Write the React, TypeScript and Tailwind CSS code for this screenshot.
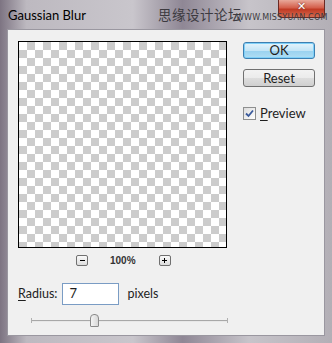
export default function App() {
  return (
    <div className="w-[332px] h-[343px] overflow-hidden bg-[linear-gradient(90deg,#7d7482_0%,#bdb9c0_8%,#c9c6cc_40%,#8f8795_55%,#c7c4ca_75%,#b3afb6_100%)] flex flex-col font-['Lato','Noto_Sans',sans-serif] text-[12.5px] text-[#1e1e1e]">
      {/* title bar */}
      <div className="h-[29px] flex items-start relative">
        <span className="ml-[8px] mt-[6px] text-[13px] text-black">Gaussian Blur</span>
        <span className="absolute left-[158px] top-[5px] text-[13.5px] leading-[18px] text-[#3c3a40] font-['Noto_Sans_CJK_SC',sans-serif] tracking-[0.5px]">
          思缘设计论坛
        </span>
        <div className="absolute left-[278px] top-0 w-[47px] h-[18px] rounded-b-[4px] border border-t-0 border-[#6b2a24] bg-[linear-gradient(#e8a89a_0%,#d4604c_45%,#c03a24_55%,#d66a4e_100%)] flex justify-center">
          <span className="mt-[1px] text-white font-bold text-[11px] leading-[11px] font-['DejaVu_Sans',sans-serif] [text-shadow:0_0_2px_#5a1a10]">✕</span>
        </div>
        <span className="absolute left-[236px] top-[13px] text-[8px] leading-[9px] font-['DejaVu_Sans',sans-serif] text-[#3c3a40] tracking-[0.2px]">
          WWW.MISSYUAN.COM
        </span>
      </div>

      {/* client area */}
      <div className="mx-[7px] h-[307px] bg-[#f0f0f0] border border-[#9a97a0] flex">
        <div className="flex flex-col pl-[10px] pt-[11px]">
          <div className="w-[209px] h-[207px] border border-black bg-[conic-gradient(#cccccc_25%,#ffffff_0_50%,#cccccc_0_75%,#ffffff_0)] bg-[length:16px_16px]" />

          <div className="flex items-center h-[11px] mt-[7px]">
            <div className="ml-[58px] w-[12px] h-[11px] border border-[#707070] rounded-[2px] bg-[linear-gradient(#fafafa,#dcdcdc)] flex items-center justify-center">
              <div className="w-[5px] h-[1px] bg-black" />
            </div>
            <span className="ml-[22px] text-[10px] font-bold text-[#333] font-['Liberation_Sans',sans-serif]">100%</span>
            <div className="ml-[23px] w-[12px] h-[11px] border border-[#707070] rounded-[2px] bg-[linear-gradient(#fafafa,#dcdcdc)] flex items-center justify-center relative">
              <div className="w-[5px] h-[1px] bg-black" />
              <div className="absolute w-[1px] h-[5px] bg-black" />
            </div>
          </div>

          <div className="flex items-center mt-[17px]">
            <span>
              <span className="underline underline-offset-2">R</span>adius:
            </span>
            <div className="ml-[5px] w-[57px] h-[22px] border border-[#7a9cc4] bg-white flex items-center pl-[6px] text-[13px]">
              7
            </div>
            <span className="ml-[8px]">pixels</span>
          </div>

          <div className="relative ml-[13px] mt-[9px] w-[197px] h-[14px]">
            <div className="absolute left-0 right-0 top-[6px] h-[2px] border-t border-[#a8a8a8] bg-[#e8e8e8]" />
            <div className="absolute left-0 top-[4px] w-[1px] h-[5px] bg-[#b0b0b0]" />
            <div className="absolute right-0 top-[4px] w-[1px] h-[5px] bg-[#b0b0b0]" />
            <div className="absolute left-[59px] top-0 w-[9px] h-[13px] border border-[#8a8a8a] rounded-t-[4px] rounded-b-[1px] bg-[linear-gradient(90deg,#f4f4f4,#d8d8d8)]" />
          </div>
        </div>

        <div className="flex flex-col pl-[15px] pt-[12px]">
          <div className="w-[72px] h-[17px] rounded-[3px] border border-[#3c7fb1] bg-[linear-gradient(#e5f4fc_0%,#c4e5f6_50%,#98d1ef_51%,#b0def4_100%)] shadow-[0_0_0_1px_#7fd0f8_inset] flex items-center justify-center text-[13px] leading-none">
            OK
          </div>
          <div className="mt-[10px] w-[72px] h-[18px] rounded-[3px] border border-[#707070] bg-[linear-gradient(#f2f2f2_0%,#ebebeb_50%,#dddddd_51%,#cfcfcf_100%)] flex items-center justify-center text-[13px] leading-none">
            Reset
          </div>
          <div className="mt-[17px] flex items-center">
            <div className="w-[13px] h-[13px] border border-[#8e8f8f] bg-[linear-gradient(135deg,#dcdcdc,#ffffff)] flex items-center justify-center">
              <svg width="9" height="9" viewBox="0 0 9 9">
                <path d="M1 4.5 L3.5 7 L8 1.5" fill="none" stroke="#3a5a9c" strokeWidth="1.8" />
              </svg>
            </div>
            <span className="ml-[4px] text-[13px]">
              <span className="underline underline-offset-2">P</span>review
            </span>
          </div>
        </div>
      </div>
    </div>
  )
}
